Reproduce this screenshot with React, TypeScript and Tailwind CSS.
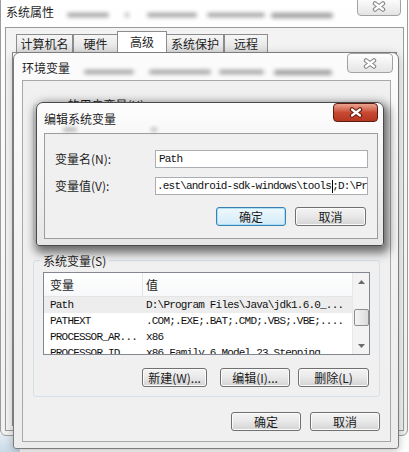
import React from 'react';

const cjk = "font-['Noto_Sans_CJK_SC','Microsoft_YaHei',sans-serif]";
const mono = "font-['Liberation_Mono','Noto_Sans_CJK_SC',monospace] tracking-[-0.8px]";

// Win7 style close glyph: white X with an outline
const CloseX: React.FC<{ outline: string }> = ({ outline }) => (
    <svg width="14" height="11" viewBox="0 0 14 11">
        <path d="M3 2.5 L11 8.5 M11 2.5 L3 8.5" stroke={outline} strokeWidth="4.5" strokeLinecap="round" fill="none" />
        <path d="M3 2.5 L11 8.5 M11 2.5 L3 8.5" stroke="#ffffff" strokeWidth="2.2" strokeLinecap="round" fill="none" />
    </svg>
);

const CloseButton: React.FC<{ red?: boolean; className: string }> = ({ red, className }) => (
    <div
        className={`absolute flex items-center justify-center rounded-[4px] border ${
            red
                ? 'border-[#5b1b12] bg-gradient-to-b from-[#e9a592] via-[#c94a33] to-[#b6351f]'
                : 'border-[#a2a2a2] bg-gradient-to-b from-[#ffffff] to-[#e4e4e4]'
        } ${className}`}
    >
        <CloseX outline={red ? '#6b1d12' : '#8a8a8a'} />
    </div>
);

interface BtnProps {
    children: React.ReactNode;
    w: string;
    focused?: boolean;
}

const WinButton: React.FC<BtnProps> = ({ children, w, focused }) => (
    <div
        className={`${w} h-[19px] flex items-center justify-center rounded-[3px] border text-[12px] leading-none text-[#1a1a1a] ${cjk} ${
            focused
                ? 'border-[#3c7fb1] shadow-[inset_0_0_0_1px_#a9e0f6] bg-gradient-to-b from-[#f0f8fd] to-[#d2ebf8]'
                : 'border-[#707070] shadow-[inset_0_0_0_1px_#fbfbfb] bg-gradient-to-b from-[#f4f4f4] via-[#e8e8e8] to-[#d3d3d3]'
        }`}
    >
        {children}
    </div>
);

const Blur: React.FC<{ className: string }> = ({ className }) => (
    <div className={`absolute rounded-full bg-[#9a9a9a] blur-[2px] ${className}`} />
);

const rows = [
    { name: 'Path', value: 'D:\\Program Files\\Java\\jdk1.6.0_...', selected: true },
    { name: 'PATHEXT', value: '.COM;.EXE;.BAT;.CMD;.VBS;.VBE;....', selected: false },
    { name: 'PROCESSOR_AR...', value: 'x86', selected: false },
    { name: 'PROCESSOR_ID...', value: 'x86 Family 6 Model 23 Stepping', selected: false },
];

const tabs = [
    { label: '计算机名', w: 'w-[57px]' },
    { label: '硬件', w: 'w-[45px]' },
    { label: '高级', w: 'w-[50px]', active: true },
    { label: '系统保护', w: 'w-[58px]' },
    { label: '远程', w: 'w-[44px]' },
];

export default function App() {
    return (
        <div className="relative w-[409px] h-[452px] overflow-hidden bg-white">
            {/* desktop corner showing under the windows */}
            <div className="absolute left-0 top-[434px] w-[20px] h-[18px] bg-gradient-to-b from-[#e3ecf4] to-[#c9d9e8]" />

            {/* 系统属性 */}
            <div className="absolute left-0 top-[-6px] w-[408px] h-[442px] rounded-[6px] border border-[#9c9c9c] bg-gradient-to-b from-[#ffffff] to-[#f1f1f1]">
                <div className={`absolute left-[5px] top-[9px] text-[12px] leading-[16px] text-[#1e1e1e] ${cjk}`}>系统属性</div>
                <Blur className="left-[66px] top-[18px] w-[42px] h-[4px]" />
                <Blur className="left-[124px] top-[18px] w-[4px] h-[4px]" />
                <Blur className="left-[146px] top-[18px] w-[50px] h-[4px]" />
                <Blur className="left-[206px] top-[18px] w-[58px] h-[4px]" />
                <Blur className="left-[270px] top-[18px] w-[62px] h-[5px]" />
                <CloseButton className="left-[356px] top-[2px] w-[44px] h-[19px]" />

                <div className="absolute left-[4px] top-[32px] w-[399px] h-[404px] border border-[#9a9a9a] bg-[#f3f3f3] flex flex-col">
                    <div className="flex items-end h-[24px] pl-[10px]">
                        {tabs.map((t) => (
                            <div
                                key={t.label}
                                className={`${t.w} flex items-center justify-center border border-b-0 border-[#8c8c8c] text-[12px] text-[#1e1e1e] ${cjk} ${
                                    t.active
                                        ? 'h-[21px] bg-white -mx-[1px] z-10'
                                        : 'h-[18px] bg-gradient-to-b from-[#f6f6f6] to-[#e0e0e0]'
                                }`}
                            >
                                {t.label}
                            </div>
                        ))}
                    </div>
                    <div className="flex-1 mx-[6px] mb-[4px] border border-[#8c8c8c] bg-white" />
                </div>
            </div>

            {/* 环境变量 */}
            <div className="absolute left-[13px] top-[52px] w-[386px] h-[397px] rounded-t-[7px] rounded-b-[3px] border border-[#7c7c7c] bg-gradient-to-b from-[#fcfcfc] via-[#f2f2f2] to-[#ececec] shadow-[0_2px_8px_rgba(0,0,0,0.25)] flex flex-col">
                <div className="relative h-[27px] pl-[8px] pt-[8px]">
                    <div className={`text-[12px] leading-[14px] text-[#1e1e1e] ${cjk}`}>环境变量</div>
                    <Blur className="left-[70px] top-[17px] w-[50px] h-[4px]" />
                    <Blur className="left-[135px] top-[17px] w-[62px] h-[4px]" />
                    <Blur className="left-[205px] top-[17px] w-[45px] h-[4px]" />
                    <Blur className="left-[260px] top-[17px] w-[58px] h-[5px]" />
                    <CloseButton className="left-[333px] top-[0px] w-[46px] h-[20px]" />
                </div>
                <div className="flex-1 ml-[8px] mr-[7px] mb-[6px] border border-[#a8a8a8] bg-[#f0f0f0] flex flex-col px-[10px]">
                    {/* user variables (mostly hidden under the edit dialog) */}
                    <div className="relative mt-[23px] h-[137px] rounded-[3px] border border-[#d5dfe5]">
                        <div className={`absolute left-[6px] top-[-8px] px-[3px] bg-[#f0f0f0] text-[12px] leading-[16px] text-[#1e1e1e] ${cjk}`}>
                            ooo 的用户变量(U)
                        </div>
                    </div>

                    {/* system variables */}
                    <div className="relative mt-[19px] h-[137px] rounded-[3px] border border-[#d5dfe5] pt-[11px] pl-[9px] pr-[9px] flex flex-col">
                        <div className={`absolute left-[6px] top-[-8px] px-[3px] bg-[#f0f0f0] text-[12px] leading-[16px] text-[#1e1e1e] ${cjk}`}>
                            系统变量(S)
                        </div>
                        <div className="h-[83px] border border-[#828790] bg-white flex overflow-hidden">
                            <div className="flex-1 flex flex-col">
                                <div className="h-[24px] shrink-0 flex border-b border-[#e5e5e5] bg-gradient-to-b from-white to-[#f7f8fa]">
                                    <div className={`w-[99px] pl-[6px] flex items-center border-r border-[#e5e5e5] text-[12px] text-[#1e1e1e] ${cjk}`}>变量</div>
                                    <div className={`flex-1 pl-[3px] flex items-center text-[12px] text-[#1e1e1e] ${cjk}`}>值</div>
                                </div>
                                {rows.map((r) => (
                                    <div
                                        key={r.name}
                                        className={`h-[16px] shrink-0 flex items-center text-[11px] text-[#111] whitespace-nowrap ${mono} ${
                                            r.selected ? 'bg-[#ededed]' : ''
                                        }`}
                                    >
                                        <div className="w-[99px] pl-[6px]">{r.name}</div>
                                        <div className="flex-1 pl-[3px]">{r.value}</div>
                                    </div>
                                ))}
                            </div>
                            <div className="w-[17px] shrink-0 border-l border-[#e8e8e8] bg-[#f3f3f3] flex flex-col items-center">
                                <div className="h-[17px] flex items-center justify-center">
                                    <svg width="7" height="4" viewBox="0 0 7 4">
                                        <path d="M0 4 L3.5 0 L7 4 Z" fill="#6a6a6a" />
                                    </svg>
                                </div>
                                <div className="mt-[19px] w-[15px] h-[17px] rounded-[2px] border border-[#8d8d8d] bg-gradient-to-r from-[#f4f4f4] to-[#dcdcdc]" />
                                <div className="flex-1" />
                                <div className="h-[16px] flex items-center justify-center">
                                    <svg width="7" height="4" viewBox="0 0 7 4">
                                        <path d="M0 0 L7 0 L3.5 4 Z" fill="#6a6a6a" />
                                    </svg>
                                </div>
                            </div>
                        </div>
                        <div className="mt-[13px] flex justify-end pr-[1px]">
                            <WinButton w="w-[65px]">新建(W)...</WinButton>
                            <div className="w-[13px]" />
                            <WinButton w="w-[70px]">编辑(I)...</WinButton>
                            <div className="w-[8px]" />
                            <WinButton w="w-[71px]">删除(L)</WinButton>
                        </div>
                    </div>

                    <div className="mt-[15px] flex justify-end gap-[9px]">
                        <WinButton w="w-[70px]">确定</WinButton>
                        <WinButton w="w-[70px]">取消</WinButton>
                    </div>
                </div>
            </div>

            {/* 编辑系统变量 */}
            <div className="absolute left-[36px] top-[102px] w-[348px] h-[144px] rounded-t-[7px] rounded-b-[3px] border border-[#4a4a4a] bg-gradient-to-b from-[#fdfdfd] via-[#f3f3f3] to-[#e6e6e6] shadow-[2px_4px_10px_3px_rgba(0,0,0,0.55)] flex flex-col">
                <div className="relative h-[30px] pl-[7px] pt-[9px]">
                    <div className={`text-[12px] leading-[14px] text-[#1e1e1e] ${cjk}`}>编辑系统变量</div>
                    <Blur className="left-[26px] top-[25px] w-[14px] h-[3px]" />
                    <Blur className="left-[114px] top-[25px] w-[6px] h-[3px]" />
                    <CloseButton red className="left-[296px] top-[0px] w-[45px] h-[19px]" />
                </div>
                <div className="flex-1 ml-[7px] mr-[5px] mb-[6px] border border-[#9c9c9c] bg-[#f0f0f0] flex flex-col pl-[10px] pt-[16px]">
                    <div className="flex items-center h-[18px]">
                        <div className={`w-[100px] text-[12px] text-[#1e1e1e] ${cjk}`}>变量名(N):</div>
                        <div className={`w-[213px] h-[18px] border border-[#abadb3] bg-white pl-[3px] flex items-center text-[11px] text-[#111] ${mono}`}>
                            Path
                        </div>
                    </div>
                    <div className="flex items-center h-[18px] mt-[9px]">
                        <div className={`w-[100px] text-[12px] text-[#1e1e1e] ${cjk}`}>变量值(V):</div>
                        <div className={`w-[213px] h-[18px] border border-[#abadb3] bg-white pl-[1px] flex items-center whitespace-nowrap overflow-hidden text-[11px] text-[#111] ${mono}`}>
                            <span>.est\android-sdk-windows\tools</span>
                            <span className="w-[1px] h-[13px] bg-black mx-[0.5px]" />
                            <span>;D:\Pr</span>
                        </div>
                    </div>
                    <div className="mt-[12px] flex pl-[161px] gap-[9px]">
                        <WinButton w="w-[70px]" focused>确定</WinButton>
                        <WinButton w="w-[71px]">取消</WinButton>
                    </div>
                </div>
            </div>
        </div>
    );
}
